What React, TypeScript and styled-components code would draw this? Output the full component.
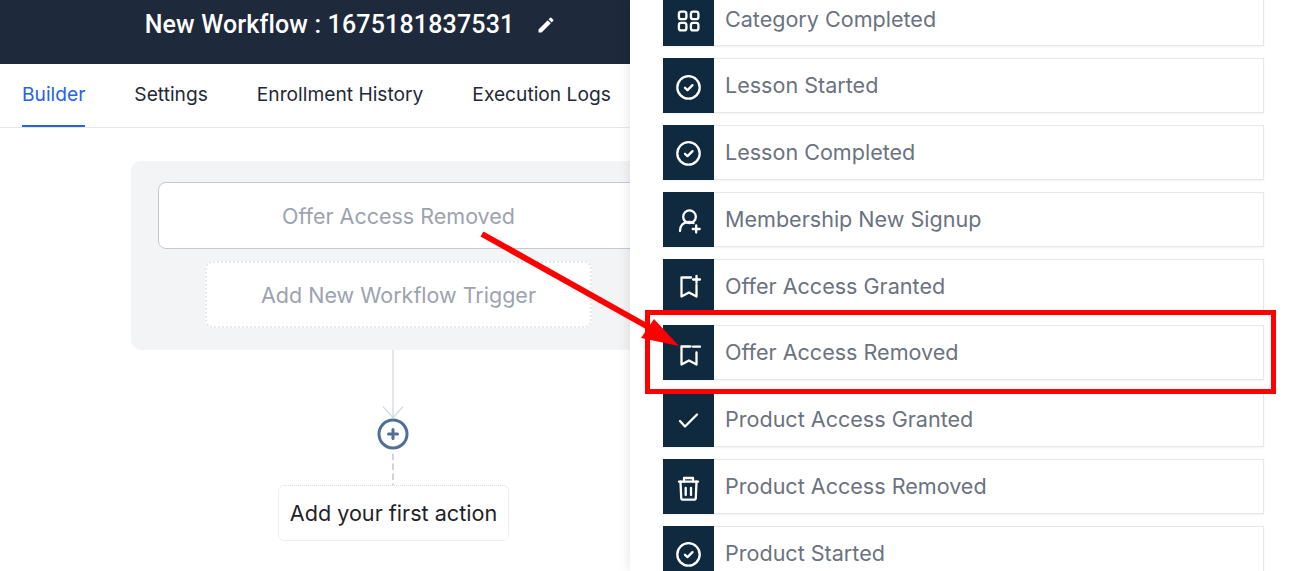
import React from "react";
import styled, { createGlobalStyle } from "styled-components";
import { MdEdit } from "react-icons/md";

const Global = createGlobalStyle`
  html, body { margin: 0; padding: 0; height: 571px; overflow: hidden; background: #fff; }
  body { font-family: Inter, "Liberation Sans", sans-serif; }
  #root { height: 571px; }
`;

const Page = styled.div`
  position: relative;
  width: 1290px;
  height: 571px;
  overflow: hidden;
  display: flex;
`;
const Main = styled.main`
  flex: 0 0 630px;
  width: 630px;
  display: flex;
  flex-direction: column;
`;
const Header = styled.header`
  height: 64px;
  background: #1e293b;
  color: #fff;
  display: flex;
  align-items: center;
  justify-content: center;
  gap: 22px;
  padding-left: 71px;
  padding-bottom: 15px;
  box-sizing: border-box;
`;
const Title = styled.h1`
  margin: 0;
  font-family: Roboto, Inter, sans-serif;
  font-weight: 500;
  font-size: 25px;
  line-height: 30px;
  letter-spacing: 0.16px;
  white-space: nowrap;
`;
const Tabs = styled.nav`
  height: 64px;
  box-sizing: border-box;
  border-bottom: 1px solid #e5e7eb;
  display: flex;
  gap: 49px;
  padding-left: 22px;
`;
const Tab = styled.div<{ $active?: boolean }>`
  height: 63px;
  box-sizing: border-box;
  font-size: 19.2px;
  line-height: 61px;
  white-space: nowrap;
  color: ${(p) => (p.$active ? "#2563eb" : "#1f2937")};
  border-bottom: 2px solid ${(p) => (p.$active ? "#2563eb" : "transparent")};
`;
const Canvas = styled.section`
  width: 786px;
  padding-top: 33px;
  display: flex;
  flex-direction: column;
  align-items: center;
`;
const TriggerGroup = styled.div`
  width: 534px;
  margin-left: 10px;
  box-sizing: border-box;
  padding: 21px 27px 22px;
  background: #f3f4f6;
  border-radius: 10px;
  display: flex;
  flex-direction: column;
  align-items: center;
  gap: 12px;
`;
const TriggerCard = styled.div`
  width: 480px;
  height: 67px;
  box-sizing: border-box;
  padding-left: 1px;
  background: #fff;
  border: 1px solid #c4cad4;
  border-radius: 8px;
  color: #9ca3af;
  font-size: 21.5px;
  display: flex;
  align-items: center;
  justify-content: center;
`;
const AddTrigger = styled(TriggerCard)`
  width: 387px;
  border: 2px dotted #e5e7eb;
`;
const ConnectorArt = styled.svg`
  display: block;
  flex: none;
`;
const ActionCard = styled.div`
  width: 231px;
  height: 56px;
  margin-left: 1px;
  box-sizing: border-box;
  background: #fff;
  border: 1px dotted #d9dce1;
  border-radius: 6px;
  color: #1f2328;
  font-size: 21.6px;
  display: flex;
  align-items: center;
  justify-content: center;
  white-space: nowrap;
`;
const Panel = styled.aside`
  position: relative;
  z-index: 2;
  flex: 1;
  height: 571px;
  background: #fff;
  box-shadow: 0 0 12px rgba(0, 0, 0, 0.12);
  padding: 0 26px 0 33px;
  overflow: hidden;
`;
const List = styled.ul`
  list-style: none;
  margin: -8.5px 0 0;
  padding: 0;
  display: flex;
  flex-direction: column;
  gap: 12px;
`;
const Row = styled.li`
  flex: none;
  height: 54.75px;
  box-sizing: border-box;
  display: flex;
  align-items: stretch;
  background: #fff;
  border: 1px solid #e5e7eb;
  box-shadow: 0 1px 2px rgba(0, 0, 0, 0.06);
`;
const IconBlock = styled.div`
  flex: 0 0 51px;
  margin: -1px 0 -1px -1px;
  background: #0f2a3f;
  display: flex;
  align-items: center;
  justify-content: center;
  color: #fff;
`;
const RowLabel = styled.span`
  padding-left: 11px;
  color: #6b7280;
  font-size: 21.55px;
  line-height: 53px;
  white-space: nowrap;
`;
const Overlay = styled.svg`
  position: absolute;
  z-index: 5;
  left: 0;
  top: 0;
  pointer-events: none;
`;

const S = styled.svg.attrs({
  width: 30,
  height: 30,
  viewBox: "-2 -2 30 30",
  fill: "none",
  stroke: "currentColor",
  strokeWidth: 2.3,
  strokeLinecap: "round",
  strokeLinejoin: "round",
})`
  display: block;
`;

const GridI = () => (
  <S>
    <rect x="2.900" y="5.700" width="7.500" height="7.500" rx="2.200" />
    <rect x="14.900" y="5.700" width="7.500" height="7.500" rx="2.200" />
    <rect x="2.900" y="16.900" width="7.500" height="7.500" rx="2.200" />
    <rect x="14.900" y="16.900" width="7.500" height="7.500" rx="2.200" />
  </S>
);
const CheckCircle = () => (
  <S>
    <circle cx="12.500" cy="14.400" r="11.200" />
    <path d="M9 14.800l2.500 2.300 5-5" />
  </S>
);
const UserPlus = () => (
  <S strokeLinecap="butt">
    <circle cx="13.500" cy="10.700" r="6.300" />
    <path d="M4 25c0-5 3-8 7-8.800 2.500-.4 4.500-.2 6.500.8" />
    <path d="M20.200 19.500v7M16.700 23h7" />
  </S>
);
const BookmarkPlus = () => (
  <S strokeLinecap="butt" strokeLinejoin="miter">
    <path d="M15 4.500H5.500v19l7.500-4 7.500 4V12" />
    <path d="M20.500 3v7M17 6.500h7" />
  </S>
);
const BookmarkMinus = () => (
  <S strokeLinecap="butt" strokeLinejoin="miter">
    <path d="M14.500 6.500H5.500v18l7.500-4 7.500 4V12.500" />
    <path d="M17 6.700h7" />
  </S>
);
const Check = () => (
  <S>
    <path d="M4 15l5 5.500L21 8.500" />
  </S>
);
const Trash = () => (
  <S>
    <path d="M3 8.700h19" />
    <path d="M8 8.700V5h9v3.700" />
    <path d="M4.500 8.700l.7 16a2 2 0 0 0 2 2h10.600a2 2 0 0 0 2-2l.7-16" />
    <path d="M9.700 15v7M15 15v7" />
  </S>
);

const rows: [string, React.ReactNode][] = [
  ["Category Completed", <GridI />],
  ["Lesson Started", <CheckCircle />],
  ["Lesson Completed", <CheckCircle />],
  ["Membership New Signup", <UserPlus />],
  ["Offer Access Granted", <BookmarkPlus />],
  ["Offer Access Removed", <BookmarkMinus />],
  ["Product Access Granted", <Check />],
  ["Product Access Removed", <Trash />],
  ["Product Started", <CheckCircle />],
];

export default function App() {
  return (
    <Page>
      <Global />
      <Main>
        <Header>
          <Title>New Workflow : 1675181837531</Title>
          <MdEdit size={20} color="#fff" />
        </Header>
        <Tabs>
          <Tab $active>Builder</Tab>
          <Tab>Settings</Tab>
          <Tab>Enrollment History</Tab>
          <Tab>Execution Logs</Tab>
        </Tabs>
        <Canvas>
          <TriggerGroup>
            <TriggerCard>Offer Access Removed</TriggerCard>
            <AddTrigger>Add New Workflow Trigger</AddTrigger>
          </TriggerGroup>
          <ConnectorArt width="40" height="135" viewBox="0 0 40 135" fill="none">
            <path d="M20 0v67.500" stroke="#d1d5db" strokeWidth="1.200" />
            <path d="M10 56.700L20 67.700l10-11" stroke="#d1d5db" strokeWidth="1.200" />
            <circle cx="20" cy="84" r="14" stroke="#4f6f96" strokeWidth="3" fill="#fff" />
            <path d="M20 79.500v9M15.500 84h9" stroke="#4f6f96" strokeWidth="3" strokeLinecap="round" />
            <path d="M20 103.500v33" stroke="#d1d5db" strokeWidth="2" strokeDasharray="6.500 3.500" />
          </ConnectorArt>
          <ActionCard>Add your first action</ActionCard>
        </Canvas>
      </Main>
      <Panel>
        <List>
          {rows.map(([label, icon]) => (
            <Row key={label}>
              <IconBlock>{icon}</IconBlock>
              <RowLabel>{label}</RowLabel>
            </Row>
          ))}
        </List>
      </Panel>
      <Overlay width="1290" height="571" viewBox="0 0 1290 571">
        <rect x="647.500" y="312.500" width="626" height="79" fill="none" stroke="#ff0000" strokeWidth="5" />
        <path d="M482 234L650 328" stroke="#ff0000" strokeWidth="6" />
        <path d="M679 346L654 319L641 338Z" fill="#ff0000" />
      </Overlay>
    </Page>
  );
}
